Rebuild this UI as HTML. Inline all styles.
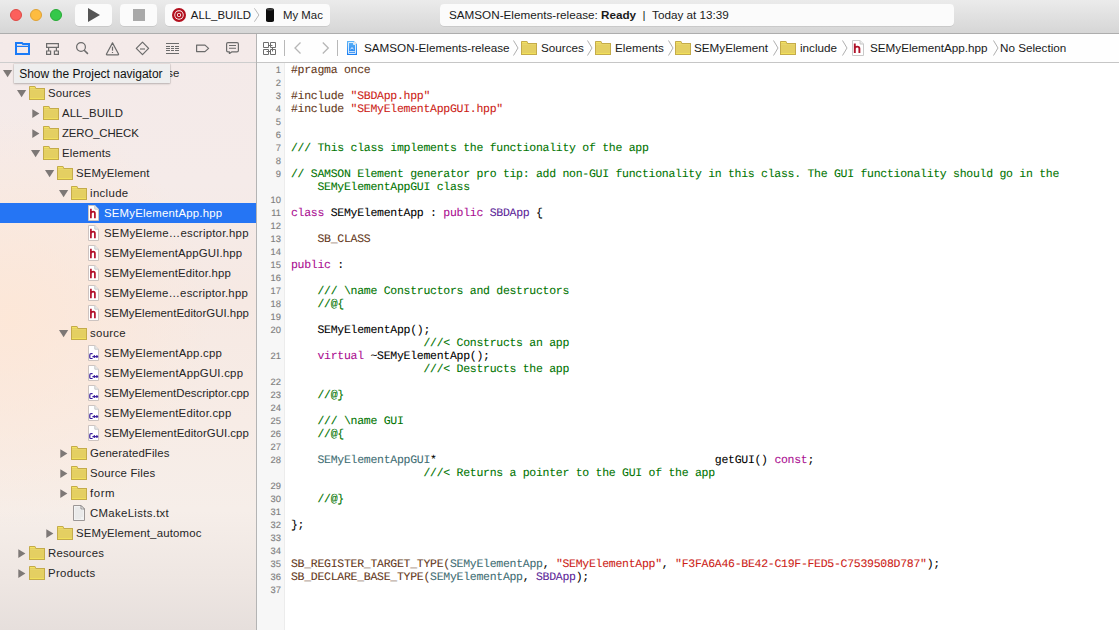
<!DOCTYPE html>
<html><head><meta charset="utf-8">
<style>
html,body{margin:0;padding:0;width:1119px;height:630px;overflow:hidden;background:#fff;}
body{position:relative;font-family:"Liberation Sans",sans-serif;}
.abs{position:absolute;}
.ic{position:absolute;display:block;}
#toolbar{position:absolute;left:0;top:0;width:1119px;height:33px;background:linear-gradient(#ebebeb,#d6d6d6);border-bottom:1px solid #adadad;}
.light{position:absolute;top:9px;width:12px;height:12px;border-radius:50%;box-sizing:border-box;}
.tbtn{position:absolute;top:4px;height:22px;background:#fbfbfb;border-radius:4px;box-shadow:0 0.5px 0.5px rgba(0,0,0,0.15);}
#sidebar{position:absolute;left:0;top:34px;width:256px;height:596px;background:radial-gradient(ellipse 200px 210px at 10px 285px,rgba(253,231,215,0.95),rgba(253,231,215,0) 100%),linear-gradient(180deg,#f4eae9 0%,#f5ebe9 25%,#f6e9e3 45%,#f7ece6 65%,#f6eee9 80%,#eee6e2 92%,#e6dfdc 100%);border-right:1px solid #b4b4b4;overflow:hidden;}
#navbar{position:absolute;left:0;top:0;width:256px;height:28px;border-bottom:1px solid #cdcdcd;}
.st{position:absolute;font-size:11.4px;line-height:18px;color:#262626;white-space:nowrap;}
.selt{color:#fff;}
.sel{position:absolute;left:0;width:256px;height:20px;background:#2575f4;}
#jump{position:absolute;left:257px;top:34px;width:862px;height:28px;background:#fefefe;border-bottom:1px solid #c6c6c6;}
.jt{position:absolute;top:6px;font-size:11.7px;line-height:16px;color:#1a1a1a;white-space:nowrap;}
#gutter{position:absolute;left:257px;top:63px;width:27px;height:567px;background:#f7f7f7;border-right:1px solid #ececec;}
.ln{position:absolute;left:0;width:24px;text-align:right;font-size:9.4px;line-height:13px;color:#7e7e7e;text-rendering:geometricPrecision;-webkit-text-stroke:0.12px currentColor;}
.cl{position:absolute;left:291px;font-family:"Liberation Mono",monospace;font-size:11.5px;letter-spacing:-0.28px;text-rendering:geometricPrecision;-webkit-text-stroke:0.08px currentColor;line-height:13px;white-space:pre;color:#000;}
#tooltip{position:absolute;left:14px;top:64px;width:156px;height:19px;background:#eeeeee;box-shadow:0 0 0 0.5px rgba(0,0,0,0.12),0 1px 2px rgba(0,0,0,0.2);font-size:12px;line-height:19px;color:#111;}
</style></head><body>

<div id="toolbar">
  <div class="light" style="left:10px;background:#fc605c;border:0.5px solid #de4a45;"></div>
  <div class="light" style="left:30px;background:#fdbc40;border:0.5px solid #dea236;"></div>
  <div class="light" style="left:50px;background:#34c84a;border:0.5px solid #27aa35;"></div>
  <div class="tbtn" style="left:75px;width:37px;"></div>
  <svg class="ic" style="left:88px;top:8px" width="12" height="14" viewBox="0 0 12 14"><path d="M0 0 L12 7 L0 14 Z" fill="#545454"/></svg>
  <div class="tbtn" style="left:120px;width:37px;"></div>
  <div class="abs" style="left:133px;top:9px;width:12px;height:12px;background:#a9a9a9;"></div>
  <div class="tbtn" style="left:165px;width:165px;"></div>
  <svg class="ic" style="left:172px;top:8px" width="14" height="14" viewBox="0 0 14 14"><circle cx="7" cy="7" r="7" fill="#b30f1d"/><circle cx="7" cy="7" r="4.7" fill="#fff"/><circle cx="7" cy="7" r="3.8" fill="#b30f1d"/><circle cx="7" cy="7" r="2.1" fill="#fff"/><circle cx="7" cy="7" r="1.25" fill="#b30f1d"/></svg>
  <div class="abs" style="left:190.8px;top:7px;font-size:11.4px;line-height:16px;color:#1a1a1a;">ALL_BUILD</div>
  <svg class="ic" style="left:254px;top:8px" width="6" height="14" viewBox="0 0 6 14"><path d="M0.4 0.3 L4.9 7 L0.4 13.7" fill="none" stroke="#b0b0b0" stroke-width="0.9"/></svg>
  <svg class="ic" style="left:266px;top:8px" width="8" height="14" viewBox="0 0 8 14"><rect x="0" y="0" width="8" height="14" rx="4" ry="1.6" fill="#0d0d0d"/><ellipse cx="4" cy="1.6" rx="3.6" ry="1.1" fill="#3a3a3a"/></svg>
  <div class="abs" style="left:283px;top:7px;font-size:11.4px;line-height:16px;color:#1a1a1a;">My Mac</div>
  <div class="tbtn" style="left:440px;width:514px;"></div>
  <div class="abs" style="left:449px;top:7px;font-size:11.7px;line-height:16px;color:#1a1a1a;white-space:nowrap;">SAMSON-Elements-release: <b>Ready</b>&nbsp;&nbsp;|&nbsp;&nbsp;Today at 13:39</div>
</div>

<div id="sidebar">
  <div id="navbar">
    <svg class="ic" style="left:15px;top:8px" width="15" height="13" viewBox="0 0 15 13"><path fill-rule="evenodd" fill="#1a7bf7" d="M0 0 H7.4 L8.4 1 H15 V13 H0 Z M2 5.1 V11 H13 V5.1 Z M2 2 V3.7 H13 V3 H7.6 L6.6 2 Z"/></svg>
    <svg class="ic" style="left:46px;top:9px" width="13" height="12" viewBox="0 0 13 12"><path d="M0.6 0.6 H12.4 V4.4 H0.6 Z M2.6 4.4 V8 M10.4 4.4 V8 M0.6 8 H4.6 V11.4 H0.6 Z M8.4 8 H12.4 V11.4 H8.4 Z" fill="none" stroke="#6b6b6b" stroke-width="1.2"/></svg>
    <svg class="ic" style="left:76px;top:8px" width="13" height="13" viewBox="0 0 13 13"><circle cx="5" cy="5" r="4.4" fill="none" stroke="#6b6b6b" stroke-width="1.2"/><path d="M8.2 8.2 L11.9 11.9" stroke="#6b6b6b" stroke-width="1.5"/></svg>
    <svg class="ic" style="left:105px;top:8px" width="15" height="14" viewBox="0 0 15 14"><path d="M7.5 0.9 L13.5 12 Q13.8 12.8 13 12.8 H2 Q1.2 12.8 1.5 12 Z" fill="none" stroke="#6b6b6b" stroke-width="1.2" stroke-linejoin="round"/><path d="M7.5 4.7 V8.7" stroke="#6b6b6b" stroke-width="1.2"/><path d="M7.5 10 V11" stroke="#6b6b6b" stroke-width="1.2"/></svg>
    <svg class="ic" style="left:135px;top:7px" width="15" height="15" viewBox="0 0 15 15"><path d="M7.5 1.1 L13.6 7.3 L7.5 13.6 L1.3 7.3 Z" fill="none" stroke="#6b6b6b" stroke-width="1.2" stroke-linejoin="round"/><path d="M5 8 H10" stroke="#6b6b6b" stroke-width="1.1"/></svg>
    <svg class="ic" style="left:166px;top:9px" width="13" height="12" viewBox="0 0 13 12"><path d="M0 0.5 H13 M0 3.5 H4 M5 3.5 H8 M9 3.5 H13 M0 5.5 H4 M5 5.5 H8 M9 5.5 H13 M0 7.5 H4 M5 7.5 H8 M9 7.5 H13 M0 10.5 H13" stroke="#6b6b6b" stroke-width="1"/></svg>
    <svg class="ic" style="left:196px;top:10px" width="14" height="9" viewBox="0 0 14 9"><path d="M0.6 1.1 H9 L12.6 4.4 L9 7.6 H0.6 Z" fill="none" stroke="#6b6b6b" stroke-width="1.2" stroke-linejoin="round"/></svg>
    <svg class="ic" style="left:226px;top:8px" width="14" height="12" viewBox="0 0 14 12"><path d="M1.9 0.6 H11 Q12.4 0.6 12.4 2 V8.4 Q12.4 9.8 11 9.8 H6 L3.4 11.6 V9.8 H1.9 Q0.6 9.8 0.6 8.4 V2 Q0.6 0.6 1.9 0.6 Z" fill="none" stroke="#6b6b6b" stroke-width="1.2" stroke-linejoin="round"/><path d="M3 3.5 H10 M3 6.3 H10" stroke="#6b6b6b" stroke-width="1.1"/></svg>
  </div>
</div>
<div id="sidecontent" class="abs" style="left:0;top:0;width:256px;height:630px;">
<svg class="ic" style="left:3px;top:70px" width="10" height="8" viewBox="0 0 10 8"><path d="M0 0.1 H9.2 L4.6 7.2 Z" fill="#7d7876"/></svg>
<div class="st" style="left:37px;top:64px;letter-spacing:0.023px">SAMSON-Elements-release</div>
<svg class="ic" style="left:17px;top:90px" width="10" height="8" viewBox="0 0 10 8"><path d="M0 0.1 H9.2 L4.6 7.2 Z" fill="#7d7876"/></svg>
<svg class="ic" style="left:29px;top:86px" width="16" height="14" viewBox="0 0 16 14">
<path d="M0 0.8 Q0 0 0.8 0 H5.6 Q6.2 0 6.5 0.6 L7.2 2 H16 V14 H0 Z" fill="#c4ab4a"/>
<path d="M1 1 H5.8 L6.6 2.6 L6.8 3 H15 V13 H1 Z" fill="#e4cf62"/>
<rect x="1" y="1" width="4.8" height="1" fill="#f4e462"/>
<rect x="1" y="12" width="14" height="1" fill="#f1e05a"/>
<rect x="1" y="3" width="14" height="1" fill="#e8d56a"/>
</svg>
<div class="st" style="left:48px;top:84px;letter-spacing:0.167px">Sources</div>
<svg class="ic" style="left:32px;top:109px" width="8" height="10" viewBox="0 0 8 10"><path d="M0.3 0.2 V9 L7.4 4.6 Z" fill="#7d7876"/></svg>
<svg class="ic" style="left:43px;top:106px" width="16" height="14" viewBox="0 0 16 14">
<path d="M0 0.8 Q0 0 0.8 0 H5.6 Q6.2 0 6.5 0.6 L7.2 2 H16 V14 H0 Z" fill="#c4ab4a"/>
<path d="M1 1 H5.8 L6.6 2.6 L6.8 3 H15 V13 H1 Z" fill="#e4cf62"/>
<rect x="1" y="1" width="4.8" height="1" fill="#f4e462"/>
<rect x="1" y="12" width="14" height="1" fill="#f1e05a"/>
<rect x="1" y="3" width="14" height="1" fill="#e8d56a"/>
</svg>
<div class="st" style="left:62px;top:104px;letter-spacing:0.088px">ALL_BUILD</div>
<svg class="ic" style="left:32px;top:129px" width="8" height="10" viewBox="0 0 8 10"><path d="M0.3 0.2 V9 L7.4 4.6 Z" fill="#7d7876"/></svg>
<svg class="ic" style="left:43px;top:126px" width="16" height="14" viewBox="0 0 16 14">
<path d="M0 0.8 Q0 0 0.8 0 H5.6 Q6.2 0 6.5 0.6 L7.2 2 H16 V14 H0 Z" fill="#c4ab4a"/>
<path d="M1 1 H5.8 L6.6 2.6 L6.8 3 H15 V13 H1 Z" fill="#e4cf62"/>
<rect x="1" y="1" width="4.8" height="1" fill="#f4e462"/>
<rect x="1" y="12" width="14" height="1" fill="#f1e05a"/>
<rect x="1" y="3" width="14" height="1" fill="#e8d56a"/>
</svg>
<div class="st" style="left:62px;top:124px;letter-spacing:-0.122px">ZERO_CHECK</div>
<svg class="ic" style="left:31px;top:150px" width="10" height="8" viewBox="0 0 10 8"><path d="M0 0.1 H9.2 L4.6 7.2 Z" fill="#7d7876"/></svg>
<svg class="ic" style="left:43px;top:146px" width="16" height="14" viewBox="0 0 16 14">
<path d="M0 0.8 Q0 0 0.8 0 H5.6 Q6.2 0 6.5 0.6 L7.2 2 H16 V14 H0 Z" fill="#c4ab4a"/>
<path d="M1 1 H5.8 L6.6 2.6 L6.8 3 H15 V13 H1 Z" fill="#e4cf62"/>
<rect x="1" y="1" width="4.8" height="1" fill="#f4e462"/>
<rect x="1" y="12" width="14" height="1" fill="#f1e05a"/>
<rect x="1" y="3" width="14" height="1" fill="#e8d56a"/>
</svg>
<div class="st" style="left:62px;top:144px;letter-spacing:0.186px">Elements</div>
<svg class="ic" style="left:45px;top:170px" width="10" height="8" viewBox="0 0 10 8"><path d="M0 0.1 H9.2 L4.6 7.2 Z" fill="#7d7876"/></svg>
<svg class="ic" style="left:57px;top:166px" width="16" height="14" viewBox="0 0 16 14">
<path d="M0 0.8 Q0 0 0.8 0 H5.6 Q6.2 0 6.5 0.6 L7.2 2 H16 V14 H0 Z" fill="#c4ab4a"/>
<path d="M1 1 H5.8 L6.6 2.6 L6.8 3 H15 V13 H1 Z" fill="#e4cf62"/>
<rect x="1" y="1" width="4.8" height="1" fill="#f4e462"/>
<rect x="1" y="12" width="14" height="1" fill="#f1e05a"/>
<rect x="1" y="3" width="14" height="1" fill="#e8d56a"/>
</svg>
<div class="st" style="left:76px;top:164px;letter-spacing:0.120px">SEMyElement</div>
<svg class="ic" style="left:59px;top:190px" width="10" height="8" viewBox="0 0 10 8"><path d="M0 0.1 H9.2 L4.6 7.2 Z" fill="#7d7876"/></svg>
<svg class="ic" style="left:71px;top:186px" width="16" height="14" viewBox="0 0 16 14">
<path d="M0 0.8 Q0 0 0.8 0 H5.6 Q6.2 0 6.5 0.6 L7.2 2 H16 V14 H0 Z" fill="#c4ab4a"/>
<path d="M1 1 H5.8 L6.6 2.6 L6.8 3 H15 V13 H1 Z" fill="#e4cf62"/>
<rect x="1" y="1" width="4.8" height="1" fill="#f4e462"/>
<rect x="1" y="12" width="14" height="1" fill="#f1e05a"/>
<rect x="1" y="3" width="14" height="1" fill="#e8d56a"/>
</svg>
<div class="st" style="left:90px;top:184px;letter-spacing:0.350px">include</div>
<div class="sel" style="top:203px"></div>
<svg class="ic" style="left:88px;top:205px" width="12" height="16" viewBox="0 0 12 16">
<path d="M0.5 0.5 H6.8 L10.5 4.2 V15.5 H0.5 Z" fill="#fff" stroke="#cdc4c1"/>
<path d="M6.8 0.5 V4.2 H10.5" fill="#e9e9e9" stroke="#c9c9c9"/>
<path d="M2.9 3.8 V13.2 M2.9 8.4 Q3.6 6.7 5.2 6.7 Q6.9 6.7 6.9 8.6 V13.2" fill="none" stroke="#b3102b" stroke-width="1.7"/>
</svg>
<div class="st selt" style="left:104px;top:204px;letter-spacing:0.206px">SEMyElementApp.hpp</div>
<svg class="ic" style="left:88px;top:225px" width="12" height="16" viewBox="0 0 12 16">
<path d="M0.5 0.5 H6.8 L10.5 4.2 V15.5 H0.5 Z" fill="#fff" stroke="#cdc4c1"/>
<path d="M6.8 0.5 V4.2 H10.5" fill="#e9e9e9" stroke="#c9c9c9"/>
<path d="M2.9 3.8 V13.2 M2.9 8.4 Q3.6 6.7 5.2 6.7 Q6.9 6.7 6.9 8.6 V13.2" fill="none" stroke="#b3102b" stroke-width="1.7"/>
</svg>
<div class="st" style="left:104px;top:224px;letter-spacing:0.236px">SEMyEleme…escriptor.hpp</div>
<svg class="ic" style="left:88px;top:245px" width="12" height="16" viewBox="0 0 12 16">
<path d="M0.5 0.5 H6.8 L10.5 4.2 V15.5 H0.5 Z" fill="#fff" stroke="#cdc4c1"/>
<path d="M6.8 0.5 V4.2 H10.5" fill="#e9e9e9" stroke="#c9c9c9"/>
<path d="M2.9 3.8 V13.2 M2.9 8.4 Q3.6 6.7 5.2 6.7 Q6.9 6.7 6.9 8.6 V13.2" fill="none" stroke="#b3102b" stroke-width="1.7"/>
</svg>
<div class="st" style="left:104px;top:244px;letter-spacing:0.165px">SEMyElementAppGUI.hpp</div>
<svg class="ic" style="left:88px;top:265px" width="12" height="16" viewBox="0 0 12 16">
<path d="M0.5 0.5 H6.8 L10.5 4.2 V15.5 H0.5 Z" fill="#fff" stroke="#cdc4c1"/>
<path d="M6.8 0.5 V4.2 H10.5" fill="#e9e9e9" stroke="#c9c9c9"/>
<path d="M2.9 3.8 V13.2 M2.9 8.4 Q3.6 6.7 5.2 6.7 Q6.9 6.7 6.9 8.6 V13.2" fill="none" stroke="#b3102b" stroke-width="1.7"/>
</svg>
<div class="st" style="left:104px;top:264px;letter-spacing:0.170px">SEMyElementEditor.hpp</div>
<svg class="ic" style="left:88px;top:285px" width="12" height="16" viewBox="0 0 12 16">
<path d="M0.5 0.5 H6.8 L10.5 4.2 V15.5 H0.5 Z" fill="#fff" stroke="#cdc4c1"/>
<path d="M6.8 0.5 V4.2 H10.5" fill="#e9e9e9" stroke="#c9c9c9"/>
<path d="M2.9 3.8 V13.2 M2.9 8.4 Q3.6 6.7 5.2 6.7 Q6.9 6.7 6.9 8.6 V13.2" fill="none" stroke="#b3102b" stroke-width="1.7"/>
</svg>
<div class="st" style="left:104px;top:284px;letter-spacing:0.205px">SEMyEleme…escriptor.hpp</div>
<svg class="ic" style="left:88px;top:305px" width="12" height="16" viewBox="0 0 12 16">
<path d="M0.5 0.5 H6.8 L10.5 4.2 V15.5 H0.5 Z" fill="#fff" stroke="#cdc4c1"/>
<path d="M6.8 0.5 V4.2 H10.5" fill="#e9e9e9" stroke="#c9c9c9"/>
<path d="M2.9 3.8 V13.2 M2.9 8.4 Q3.6 6.7 5.2 6.7 Q6.9 6.7 6.9 8.6 V13.2" fill="none" stroke="#b3102b" stroke-width="1.7"/>
</svg>
<div class="st" style="left:104px;top:304px;letter-spacing:0.022px">SEMyElementEditorGUI.hpp</div>
<svg class="ic" style="left:59px;top:330px" width="10" height="8" viewBox="0 0 10 8"><path d="M0 0.1 H9.2 L4.6 7.2 Z" fill="#7d7876"/></svg>
<svg class="ic" style="left:71px;top:326px" width="16" height="14" viewBox="0 0 16 14">
<path d="M0 0.8 Q0 0 0.8 0 H5.6 Q6.2 0 6.5 0.6 L7.2 2 H16 V14 H0 Z" fill="#c4ab4a"/>
<path d="M1 1 H5.8 L6.6 2.6 L6.8 3 H15 V13 H1 Z" fill="#e4cf62"/>
<rect x="1" y="1" width="4.8" height="1" fill="#f4e462"/>
<rect x="1" y="12" width="14" height="1" fill="#f1e05a"/>
<rect x="1" y="3" width="14" height="1" fill="#e8d56a"/>
</svg>
<div class="st" style="left:90px;top:324px;letter-spacing:0.300px">source</div>
<svg class="ic" style="left:88px;top:345px" width="12" height="16" viewBox="0 0 12 16">
<path d="M0.5 0.5 H6.8 L10.5 4.2 V15.5 H0.5 Z" fill="#fff" stroke="#cdc4c1"/>
<path d="M6.8 0.5 V4.2 H10.5" fill="#e9e9e9" stroke="#c9c9c9"/>
<path d="M4.6 8.7 H3 Q1.8 8.7 1.8 10 V12.4 Q1.8 13.5 3 13.5 H4.6" fill="none" stroke="#3b1f9c" stroke-width="1.2"/>
<path d="M4.4 11.6 H10.2 M6.3 10.1 V13.1 M8.9 10.1 V13.1" stroke="#3b1f9c" stroke-width="1.1"/>
</svg>
<div class="st" style="left:104px;top:344px;letter-spacing:0.229px">SEMyElementApp.cpp</div>
<svg class="ic" style="left:88px;top:365px" width="12" height="16" viewBox="0 0 12 16">
<path d="M0.5 0.5 H6.8 L10.5 4.2 V15.5 H0.5 Z" fill="#fff" stroke="#cdc4c1"/>
<path d="M6.8 0.5 V4.2 H10.5" fill="#e9e9e9" stroke="#c9c9c9"/>
<path d="M4.6 8.7 H3 Q1.8 8.7 1.8 10 V12.4 Q1.8 13.5 3 13.5 H4.6" fill="none" stroke="#3b1f9c" stroke-width="1.2"/>
<path d="M4.4 11.6 H10.2 M6.3 10.1 V13.1 M8.9 10.1 V13.1" stroke="#3b1f9c" stroke-width="1.1"/>
</svg>
<div class="st" style="left:104px;top:364px;letter-spacing:0.240px">SEMyElementAppGUI.cpp</div>
<svg class="ic" style="left:88px;top:385px" width="12" height="16" viewBox="0 0 12 16">
<path d="M0.5 0.5 H6.8 L10.5 4.2 V15.5 H0.5 Z" fill="#fff" stroke="#cdc4c1"/>
<path d="M6.8 0.5 V4.2 H10.5" fill="#e9e9e9" stroke="#c9c9c9"/>
<path d="M4.6 8.7 H3 Q1.8 8.7 1.8 10 V12.4 Q1.8 13.5 3 13.5 H4.6" fill="none" stroke="#3b1f9c" stroke-width="1.2"/>
<path d="M4.4 11.6 H10.2 M6.3 10.1 V13.1 M8.9 10.1 V13.1" stroke="#3b1f9c" stroke-width="1.1"/>
</svg>
<div class="st" style="left:104px;top:384px;letter-spacing:0.004px">SEMyElementDescriptor.cpp</div>
<svg class="ic" style="left:88px;top:405px" width="12" height="16" viewBox="0 0 12 16">
<path d="M0.5 0.5 H6.8 L10.5 4.2 V15.5 H0.5 Z" fill="#fff" stroke="#cdc4c1"/>
<path d="M6.8 0.5 V4.2 H10.5" fill="#e9e9e9" stroke="#c9c9c9"/>
<path d="M4.6 8.7 H3 Q1.8 8.7 1.8 10 V12.4 Q1.8 13.5 3 13.5 H4.6" fill="none" stroke="#3b1f9c" stroke-width="1.2"/>
<path d="M4.4 11.6 H10.2 M6.3 10.1 V13.1 M8.9 10.1 V13.1" stroke="#3b1f9c" stroke-width="1.1"/>
</svg>
<div class="st" style="left:104px;top:404px;letter-spacing:0.220px">SEMyElementEditor.cpp</div>
<svg class="ic" style="left:88px;top:425px" width="12" height="16" viewBox="0 0 12 16">
<path d="M0.5 0.5 H6.8 L10.5 4.2 V15.5 H0.5 Z" fill="#fff" stroke="#cdc4c1"/>
<path d="M6.8 0.5 V4.2 H10.5" fill="#e9e9e9" stroke="#c9c9c9"/>
<path d="M4.6 8.7 H3 Q1.8 8.7 1.8 10 V12.4 Q1.8 13.5 3 13.5 H4.6" fill="none" stroke="#3b1f9c" stroke-width="1.2"/>
<path d="M4.4 11.6 H10.2 M6.3 10.1 V13.1 M8.9 10.1 V13.1" stroke="#3b1f9c" stroke-width="1.1"/>
</svg>
<div class="st" style="left:104px;top:424px;letter-spacing:0.048px">SEMyElementEditorGUI.cpp</div>
<svg class="ic" style="left:60px;top:449px" width="8" height="10" viewBox="0 0 8 10"><path d="M0.3 0.2 V9 L7.4 4.6 Z" fill="#7d7876"/></svg>
<svg class="ic" style="left:71px;top:446px" width="16" height="14" viewBox="0 0 16 14">
<path d="M0 0.8 Q0 0 0.8 0 H5.6 Q6.2 0 6.5 0.6 L7.2 2 H16 V14 H0 Z" fill="#c4ab4a"/>
<path d="M1 1 H5.8 L6.6 2.6 L6.8 3 H15 V13 H1 Z" fill="#e4cf62"/>
<rect x="1" y="1" width="4.8" height="1" fill="#f4e462"/>
<rect x="1" y="12" width="14" height="1" fill="#f1e05a"/>
<rect x="1" y="3" width="14" height="1" fill="#e8d56a"/>
</svg>
<div class="st" style="left:90px;top:444px;letter-spacing:0.115px">GeneratedFiles</div>
<svg class="ic" style="left:60px;top:469px" width="8" height="10" viewBox="0 0 8 10"><path d="M0.3 0.2 V9 L7.4 4.6 Z" fill="#7d7876"/></svg>
<svg class="ic" style="left:71px;top:466px" width="16" height="14" viewBox="0 0 16 14">
<path d="M0 0.8 Q0 0 0.8 0 H5.6 Q6.2 0 6.5 0.6 L7.2 2 H16 V14 H0 Z" fill="#c4ab4a"/>
<path d="M1 1 H5.8 L6.6 2.6 L6.8 3 H15 V13 H1 Z" fill="#e4cf62"/>
<rect x="1" y="1" width="4.8" height="1" fill="#f4e462"/>
<rect x="1" y="12" width="14" height="1" fill="#f1e05a"/>
<rect x="1" y="3" width="14" height="1" fill="#e8d56a"/>
</svg>
<div class="st" style="left:90px;top:464px;letter-spacing:0.164px">Source Files</div>
<svg class="ic" style="left:60px;top:489px" width="8" height="10" viewBox="0 0 8 10"><path d="M0.3 0.2 V9 L7.4 4.6 Z" fill="#7d7876"/></svg>
<svg class="ic" style="left:71px;top:486px" width="16" height="14" viewBox="0 0 16 14">
<path d="M0 0.8 Q0 0 0.8 0 H5.6 Q6.2 0 6.5 0.6 L7.2 2 H16 V14 H0 Z" fill="#c4ab4a"/>
<path d="M1 1 H5.8 L6.6 2.6 L6.8 3 H15 V13 H1 Z" fill="#e4cf62"/>
<rect x="1" y="1" width="4.8" height="1" fill="#f4e462"/>
<rect x="1" y="12" width="14" height="1" fill="#f1e05a"/>
<rect x="1" y="3" width="14" height="1" fill="#e8d56a"/>
</svg>
<div class="st" style="left:90px;top:484px;letter-spacing:0.600px">form</div>
<svg class="ic" style="left:73px;top:505px" width="13" height="16" viewBox="0 0 13 16">
<path d="M0.5 0.5 H8 L11.5 4 V15.5 H0.5 Z" fill="#f2f2f2" stroke="#9c9796"/>
<path d="M8 0.5 V4 H11.5 Z" fill="#fff" stroke="#8f8b8a"/>
<path d="M2 3 H7 M2 5 H10 M2 7 H10 M2 9 H10 M2 11 H10 M2 13 H8" stroke="#dcdcdc" stroke-width="0.7"/>
</svg>
<div class="st" style="left:90px;top:504px;letter-spacing:0.315px">CMakeLists.txt</div>
<svg class="ic" style="left:46px;top:529px" width="8" height="10" viewBox="0 0 8 10"><path d="M0.3 0.2 V9 L7.4 4.6 Z" fill="#7d7876"/></svg>
<svg class="ic" style="left:57px;top:526px" width="16" height="14" viewBox="0 0 16 14">
<path d="M0 0.8 Q0 0 0.8 0 H5.6 Q6.2 0 6.5 0.6 L7.2 2 H16 V14 H0 Z" fill="#c4ab4a"/>
<path d="M1 1 H5.8 L6.6 2.6 L6.8 3 H15 V13 H1 Z" fill="#e4cf62"/>
<rect x="1" y="1" width="4.8" height="1" fill="#f4e462"/>
<rect x="1" y="12" width="14" height="1" fill="#f1e05a"/>
<rect x="1" y="3" width="14" height="1" fill="#e8d56a"/>
</svg>
<div class="st" style="left:76px;top:524px;letter-spacing:0.178px">SEMyElement_automoc</div>
<svg class="ic" style="left:18px;top:549px" width="8" height="10" viewBox="0 0 8 10"><path d="M0.3 0.2 V9 L7.4 4.6 Z" fill="#7d7876"/></svg>
<svg class="ic" style="left:29px;top:546px" width="16" height="14" viewBox="0 0 16 14">
<path d="M0 0.8 Q0 0 0.8 0 H5.6 Q6.2 0 6.5 0.6 L7.2 2 H16 V14 H0 Z" fill="#c4ab4a"/>
<path d="M1 1 H5.8 L6.6 2.6 L6.8 3 H15 V13 H1 Z" fill="#e4cf62"/>
<rect x="1" y="1" width="4.8" height="1" fill="#f4e462"/>
<rect x="1" y="12" width="14" height="1" fill="#f1e05a"/>
<rect x="1" y="3" width="14" height="1" fill="#e8d56a"/>
</svg>
<div class="st" style="left:48px;top:544px;letter-spacing:0.188px">Resources</div>
<svg class="ic" style="left:18px;top:569px" width="8" height="10" viewBox="0 0 8 10"><path d="M0.3 0.2 V9 L7.4 4.6 Z" fill="#7d7876"/></svg>
<svg class="ic" style="left:29px;top:566px" width="16" height="14" viewBox="0 0 16 14">
<path d="M0 0.8 Q0 0 0.8 0 H5.6 Q6.2 0 6.5 0.6 L7.2 2 H16 V14 H0 Z" fill="#c4ab4a"/>
<path d="M1 1 H5.8 L6.6 2.6 L6.8 3 H15 V13 H1 Z" fill="#e4cf62"/>
<rect x="1" y="1" width="4.8" height="1" fill="#f4e462"/>
<rect x="1" y="12" width="14" height="1" fill="#f1e05a"/>
<rect x="1" y="3" width="14" height="1" fill="#e8d56a"/>
</svg>
<div class="st" style="left:48px;top:564px;letter-spacing:0.329px">Products</div>
</div>
<div id="tooltip"><span style="position:absolute;left:5.2px;top:0.8px;">Show the Project navigator</span></div>

<div id="jump">
  <svg class="ic" style="left:6px;top:8px" width="13" height="13" viewBox="0 0 13 13"><path d="M0.5 0.5 H5.5 V5.5 H0.5 Z M7.5 0.5 H12.5 V5.5 H7.5 Z M0.5 7.5 H5.5 V12.5 H0.5 Z M7.5 7.5 H12.5 V12.5 H7.5 Z M5.5 3.5 H9.5 M9.5 5.5 V9.5 M3.5 9.5 H7.5" fill="none" stroke="#6e6e6e" stroke-width="1"/></svg>
  <div class="abs" style="left:27px;top:6px;width:1px;height:16px;background:#b8b8b8;"></div>
  <svg class="ic" style="left:37px;top:8px" width="8" height="12" viewBox="0 0 8 12"><path d="M6.5 0.5 L1 6 L6.5 11.5" fill="none" stroke="#b6b6b6" stroke-width="1.3"/></svg>
  <svg class="ic" style="left:65px;top:8px" width="8" height="12" viewBox="0 0 8 12"><path d="M0.8 0.5 L6.3 6 L0.8 11.5" fill="none" stroke="#b6b6b6" stroke-width="1.3"/></svg>
  <div class="abs" style="left:80px;top:6px;width:1px;height:16px;background:#b8b8b8;"></div>
  <svg class="ic" style="left:90px;top:7px" width="11" height="15" viewBox="0 0 11 15"><defs><linearGradient id="pg" x1="0" y1="0" x2="0" y2="1"><stop offset="0" stop-color="#62b6f7"/><stop offset="1" stop-color="#1a7ef2"/></linearGradient></defs><path d="M0 0 H7 L10 3 V14 H0 Z" fill="url(#pg)"/><path d="M1.5 1.5 H6.5 V3.5 H8.5 V12.5 H1.5 Z" fill="none" stroke="#e8f4ff" stroke-width="0.9"/><path d="M2.2 10.7 H7.8" stroke="#fff" stroke-width="0.9"/><path d="M3.5 8 Q5 5.4 6.5 8" fill="none" stroke="#fff" stroke-width="1"/><path d="M7 0 V3 H10" fill="#e6e6e6"/></svg>
  <div class="jt" style="left:107px;">SAMSON-Elements-release</div>
  <svg class="ic" style="left:256px;top:6px" width="6" height="16" viewBox="0 0 6 16"><path d="M0.5 0.5 L5 8 L0.5 15.5" fill="none" stroke="#a6a6a6" stroke-width="0.9"/></svg>
<svg class="ic" style="left:264px;top:7px" width="16" height="14" viewBox="0 0 16 14">
<path d="M0 0.8 Q0 0 0.8 0 H5.6 Q6.2 0 6.5 0.6 L7.2 2 H16 V14 H0 Z" fill="#c4ab4a"/>
<path d="M1 1 H5.8 L6.6 2.6 L6.8 3 H15 V13 H1 Z" fill="#e4cf62"/>
<rect x="1" y="1" width="4.8" height="1" fill="#f4e462"/>
<rect x="1" y="12" width="14" height="1" fill="#f1e05a"/>
<rect x="1" y="3" width="14" height="1" fill="#e8d56a"/>
</svg>
<div class="jt" style="left:284px;">Sources</div>
<svg class="ic" style="left:330px;top:6px" width="6" height="16" viewBox="0 0 6 16"><path d="M0.5 0.5 L5 8 L0.5 15.5" fill="none" stroke="#a6a6a6" stroke-width="0.9"/></svg>
<svg class="ic" style="left:338px;top:7px" width="16" height="14" viewBox="0 0 16 14">
<path d="M0 0.8 Q0 0 0.8 0 H5.6 Q6.2 0 6.5 0.6 L7.2 2 H16 V14 H0 Z" fill="#c4ab4a"/>
<path d="M1 1 H5.8 L6.6 2.6 L6.8 3 H15 V13 H1 Z" fill="#e4cf62"/>
<rect x="1" y="1" width="4.8" height="1" fill="#f4e462"/>
<rect x="1" y="12" width="14" height="1" fill="#f1e05a"/>
<rect x="1" y="3" width="14" height="1" fill="#e8d56a"/>
</svg>
<div class="jt" style="left:358px;">Elements</div>
<svg class="ic" style="left:411px;top:6px" width="6" height="16" viewBox="0 0 6 16"><path d="M0.5 0.5 L5 8 L0.5 15.5" fill="none" stroke="#a6a6a6" stroke-width="0.9"/></svg>
<svg class="ic" style="left:418px;top:7px" width="16" height="14" viewBox="0 0 16 14">
<path d="M0 0.8 Q0 0 0.8 0 H5.6 Q6.2 0 6.5 0.6 L7.2 2 H16 V14 H0 Z" fill="#c4ab4a"/>
<path d="M1 1 H5.8 L6.6 2.6 L6.8 3 H15 V13 H1 Z" fill="#e4cf62"/>
<rect x="1" y="1" width="4.8" height="1" fill="#f4e462"/>
<rect x="1" y="12" width="14" height="1" fill="#f1e05a"/>
<rect x="1" y="3" width="14" height="1" fill="#e8d56a"/>
</svg>
<div class="jt" style="left:437px;">SEMyElement</div>
<svg class="ic" style="left:516px;top:6px" width="6" height="16" viewBox="0 0 6 16"><path d="M0.5 0.5 L5 8 L0.5 15.5" fill="none" stroke="#a6a6a6" stroke-width="0.9"/></svg>
<svg class="ic" style="left:523px;top:7px" width="16" height="14" viewBox="0 0 16 14">
<path d="M0 0.8 Q0 0 0.8 0 H5.6 Q6.2 0 6.5 0.6 L7.2 2 H16 V14 H0 Z" fill="#c4ab4a"/>
<path d="M1 1 H5.8 L6.6 2.6 L6.8 3 H15 V13 H1 Z" fill="#e4cf62"/>
<rect x="1" y="1" width="4.8" height="1" fill="#f4e462"/>
<rect x="1" y="12" width="14" height="1" fill="#f1e05a"/>
<rect x="1" y="3" width="14" height="1" fill="#e8d56a"/>
</svg>
<div class="jt" style="left:543px;">include</div>
<svg class="ic" style="left:585px;top:6px" width="6" height="16" viewBox="0 0 6 16"><path d="M0.5 0.5 L5 8 L0.5 15.5" fill="none" stroke="#a6a6a6" stroke-width="0.9"/></svg>
<svg class="ic" style="left:595px;top:6px" width="12" height="16" viewBox="0 0 12 16">
<path d="M0.5 0.5 H8 L11.5 4 V15.5 H0.5 Z" fill="#fff" stroke="#c8c8c8"/>
<path d="M8 0.5 V4 H11.5" fill="#eee" stroke="#c8c8c8"/>
<path d="M2.8 3.5 V13 M2.8 8.3 Q3.5 6.6 5.1 6.6 Q7.4 6.6 7.4 8.6 V13" fill="none" stroke="#b0142a" stroke-width="1.9"/></svg>
<div class="jt" style="left:613px;">SEMyElementApp.hpp</div>
<svg class="ic" style="left:736px;top:6px" width="6" height="16" viewBox="0 0 6 16"><path d="M0.5 0.5 L5 8 L0.5 15.5" fill="none" stroke="#a6a6a6" stroke-width="0.9"/></svg>
<div class="jt" style="left:743px;">No Selection</div>
</div>

<div id="gutter">
<div class="ln" style="top:0.00px">1</div>
<div class="ln" style="top:13.00px">2</div>
<div class="ln" style="top:26.00px">3</div>
<div class="ln" style="top:39.00px">4</div>
<div class="ln" style="top:52.00px">5</div>
<div class="ln" style="top:65.00px">6</div>
<div class="ln" style="top:78.00px">7</div>
<div class="ln" style="top:91.00px">8</div>
<div class="ln" style="top:104.00px">9</div>
<div class="ln" style="top:130.00px">10</div>
<div class="ln" style="top:143.00px">11</div>
<div class="ln" style="top:156.00px">12</div>
<div class="ln" style="top:169.00px">13</div>
<div class="ln" style="top:182.00px">14</div>
<div class="ln" style="top:195.00px">15</div>
<div class="ln" style="top:208.00px">16</div>
<div class="ln" style="top:221.00px">17</div>
<div class="ln" style="top:234.00px">18</div>
<div class="ln" style="top:247.00px">19</div>
<div class="ln" style="top:260.00px">20</div>
<div class="ln" style="top:286.00px">21</div>
<div class="ln" style="top:312.00px">22</div>
<div class="ln" style="top:325.00px">23</div>
<div class="ln" style="top:338.00px">24</div>
<div class="ln" style="top:351.00px">25</div>
<div class="ln" style="top:364.00px">26</div>
<div class="ln" style="top:377.00px">27</div>
<div class="ln" style="top:390.00px">28</div>
<div class="ln" style="top:416.00px">29</div>
<div class="ln" style="top:429.00px">30</div>
<div class="ln" style="top:442.00px">31</div>
<div class="ln" style="top:455.00px">32</div>
<div class="ln" style="top:468.00px">33</div>
<div class="ln" style="top:481.00px">34</div>
<div class="ln" style="top:494.00px">35</div>
<div class="ln" style="top:507.00px">36</div>
<div class="ln" style="top:520.00px">37</div>
</div>
<div class="cl" style="top:63.50px"><span style="color:#643820">#pragma once</span></div>
<div class="cl" style="top:89.50px"><span style="color:#643820">#include </span><span style="color:#cc2216">&quot;SBDApp.hpp&quot;</span></div>
<div class="cl" style="top:102.50px"><span style="color:#643820">#include </span><span style="color:#cc2216">&quot;SEMyElementAppGUI.hpp&quot;</span></div>
<div class="cl" style="top:141.50px"><span style="color:#007400">/// This class implements the functionality of the app</span></div>
<div class="cl" style="top:167.50px"><span style="color:#007400">// SAMSON Element generator pro tip: add non-GUI functionality in this class. The GUI functionality should go in the</span></div>
<div class="cl" style="top:180.50px"><span style="color:#007400">    SEMyElementAppGUI class</span></div>
<div class="cl" style="top:206.50px"><span style="color:#aa0d91">class</span><span style="color:#000"> SEMyElementApp : </span><span style="color:#aa0d91">public</span><span style="color:#000"> </span><span style="color:#5c2699">SBDApp</span><span style="color:#000"> {</span></div>
<div class="cl" style="top:232.50px"><span style="color:#643820">    SB_CLASS</span></div>
<div class="cl" style="top:258.50px"><span style="color:#aa0d91">public</span><span style="color:#000"> :</span></div>
<div class="cl" style="top:284.50px"><span style="color:#007400">    /// \name Constructors and destructors</span></div>
<div class="cl" style="top:297.50px"><span style="color:#007400">    //@{</span></div>
<div class="cl" style="top:323.50px"><span style="color:#000">    SEMyElementApp();</span></div>
<div class="cl" style="top:336.50px"><span style="color:#007400">                    ///&lt; Constructs an app</span></div>
<div class="cl" style="top:349.50px"><span style="color:#000">    </span><span style="color:#aa0d91">virtual</span><span style="color:#000"> ~SEMyElementApp();</span></div>
<div class="cl" style="top:362.50px"><span style="color:#007400">                    ///&lt; Destructs the app</span></div>
<div class="cl" style="top:388.50px"><span style="color:#007400">    //@}</span></div>
<div class="cl" style="top:414.50px"><span style="color:#007400">    /// \name GUI</span></div>
<div class="cl" style="top:427.50px"><span style="color:#007400">    //@{</span></div>
<div class="cl" style="top:453.50px"><span style="color:#000">    </span><span style="color:#3f6e74">SEMyElementAppGUI</span><span style="color:#000">*                                          getGUI() </span><span style="color:#aa0d91">const</span><span style="color:#000">;</span></div>
<div class="cl" style="top:466.50px"><span style="color:#007400">                    ///&lt; Returns a pointer to the GUI of the app</span></div>
<div class="cl" style="top:492.50px"><span style="color:#007400">    //@}</span></div>
<div class="cl" style="top:518.50px"><span style="color:#000">};</span></div>
<div class="cl" style="top:557.50px"><span style="color:#643820">SB_REGISTER_TARGET_TYPE(</span><span style="color:#3f6e74">SEMyElementApp</span><span style="color:#000">, </span><span style="color:#cc2216">&quot;SEMyElementApp&quot;</span><span style="color:#000">, </span><span style="color:#cc2216">&quot;F3FA6A46-BE42-C19F-FED5-C7539508D787&quot;</span><span style="color:#000">);</span></div>
<div class="cl" style="top:570.50px"><span style="color:#643820">SB_DECLARE_BASE_TYPE(</span><span style="color:#3f6e74">SEMyElementApp</span><span style="color:#000">, </span><span style="color:#5c2699">SBDApp</span><span style="color:#000">);</span></div>

</body></html>
